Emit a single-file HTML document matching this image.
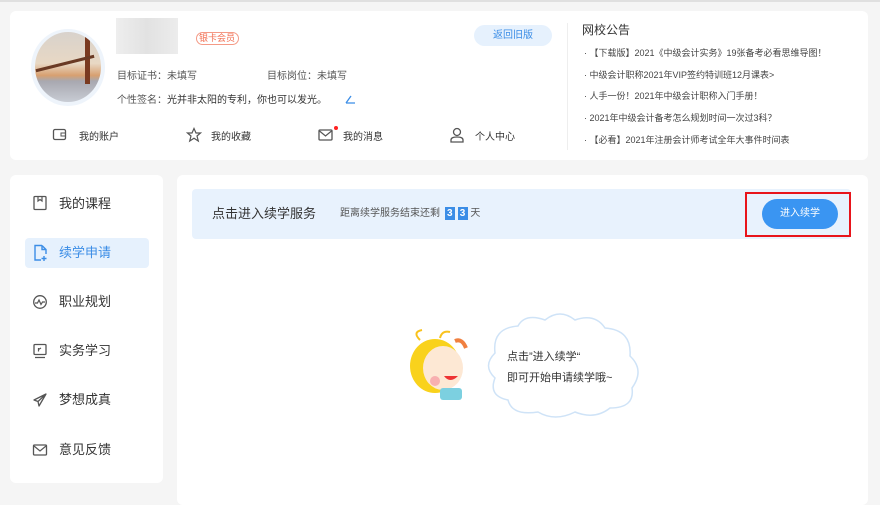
<!DOCTYPE html>
<html><head><meta charset="utf-8"><style>
*{margin:0;padding:0;box-sizing:border-box}
body{width:880px;height:499px;background:#f5f5f5;font-family:"Liberation Sans","Noto Sans CJK SC",sans-serif;position:relative;overflow:hidden;color:#333}
.abs{position:absolute}
.card{position:absolute;background:#fff;border-radius:6px}
.t{position:absolute;white-space:nowrap;line-height:1.2}
</style></head><body>
<div class="abs" style="left:0;top:0;width:880px;height:2px;background:#e0e0e0"></div>
<div class="card" style="left:10px;top:11px;width:858px;height:149px"></div>
<div class="abs" style="left:31px;top:29px;width:74px;height:77px;border-radius:50%;background:#eef4fb"></div>
<div class="abs" style="left:35px;top:32px;width:66px;height:70px;border-radius:50%;overflow:hidden;background:linear-gradient(#d8d2cc 0%,#e8d8c4 45%,#d8a070 62%,#a8a8b0 70%,#c8ccd4 100%)">
<div class="abs" style="left:50px;top:4px;width:5px;height:48px;background:#7a3a20"></div>
<div class="abs" style="left:0;top:30px;width:60px;height:3px;background:#6a3a24;transform:rotate(-14deg)"></div>
</div>
<div class="abs" style="left:116px;top:18px;width:62px;height:36px;background:linear-gradient(90deg,#eee,#e2e2e2,#ececec)"></div>
<div class="abs" style="left:196px;top:32px;width:43px;height:13px;border:1px solid #f49a86;border-radius:7px"></div>
<div class="t" style="left:199px;top:33px;font-size:9px;color:#f26d50">银卡会员</div>
<div class="abs" style="left:474px;top:25px;width:78px;height:21px;border-radius:11px;background:#e6f1fd"></div>
<div class="t" style="left:474px;top:30px;width:78px;text-align:center;font-size:10px;color:#3b8de6">返回旧版</div>
<div class="t" style="left:117px;top:71px;font-size:10px;color:#555">目标证书：未填写</div>
<div class="t" style="left:267px;top:71px;font-size:10px;color:#555">目标岗位：未填写</div>
<div class="t" style="left:117px;top:95px;font-size:10px;color:#555">个性签名：<span style="color:#333">光并非太阳的专利，你也可以发光。</span></div>
<svg class="abs" style="left:344px;top:94px" width="12" height="10"><path d="M2 9L7 2M2 9H11" stroke="#3b8de6" stroke-width="1.3" fill="none"/></svg>
<svg class="abs" style="left:52px;top:128px" width="16" height="14"><rect x="1.5" y="1.5" width="12" height="10" rx="1.5" stroke="#555" stroke-width="1.3" fill="none"/><path d="M9 5H13.5V8H9Z" stroke="#555" fill="none"/></svg>
<div class="t" style="left:79px;top:132px;font-size:10px;color:#333">我的账户</div>
<svg class="abs" style="left:186px;top:127px" width="16" height="16"><path d="M8 1.5L10 6H14.5L11 9L12.3 14L8 11.2L3.7 14L5 9L1.5 6H6Z" stroke="#555" stroke-width="1.2" fill="none"/></svg>
<div class="t" style="left:211px;top:132px;font-size:10px;color:#333">我的收藏</div>
<svg class="abs" style="left:318px;top:127px" width="16" height="16"><rect x="1" y="3" width="13" height="10" rx="1" stroke="#555" stroke-width="1.3" fill="none"/><path d="M1.5 4L7.5 9L13.5 4" stroke="#555" stroke-width="1.2" fill="none"/></svg>
<div class="abs" style="left:334px;top:126px;width:4px;height:4px;border-radius:50%;background:#f22"></div>
<div class="t" style="left:343px;top:132px;font-size:10px;color:#333">我的消息</div>
<svg class="abs" style="left:450px;top:127px" width="14" height="17"><circle cx="7" cy="5" r="3.5" stroke="#555" stroke-width="1.3" fill="none"/><path d="M1 15V13Q1 10 7 10Q13 10 13 13V15Z" stroke="#555" stroke-width="1.3" fill="none"/></svg>
<div class="t" style="left:475px;top:132px;font-size:10px;color:#333">个人中心</div>
<div class="abs" style="left:567px;top:23px;width:1px;height:127px;background:#eee"></div>
<div class="t" style="left:582px;top:23px;font-size:12px;color:#333">网校公告</div>
<div style="position:absolute;left:584px;top:43px;font-size:9px;color:#444;line-height:21.7px;white-space:nowrap">
<div>&middot; 【下载版】2021《中级会计实务》19张备考必看思维导图！</div>
<div>&middot; 中级会计职称2021年VIP签约特训班12月课表&gt;</div>
<div>&middot; 人手一份！2021年中级会计职称入门手册！</div>
<div>&middot; 2021年中级会计备考怎么规划时间一次过3科？</div>
<div>&middot; 【必看】2021年注册会计师考试全年大事件时间表</div>
</div>
<div class="card" style="left:10px;top:175px;width:153px;height:308px"></div>
<div class="abs" style="left:25px;top:238px;width:124px;height:30px;background:#e6f1fd;border-radius:4px"></div>
<svg class="abs" style="left:32px;top:195px" width="16" height="16"><rect x="2" y="1.5" width="12" height="13" rx="1" stroke="#555" stroke-width="1.3" fill="none"/><path d="M6 1.5V6L8 4.5L10 6V1.5" stroke="#555" stroke-width="1.2" fill="none"/></svg>
<div class="t" style="left:59px;top:196px;font-size:13px;color:#333">我的课程</div>
<svg class="abs" style="left:32px;top:244px" width="16" height="18"><path d="M10 1.5H3V16H9M10 1.5L14 5.5V10M10 1.5V5.5H14M12 12V17M9.5 14.5H14.5" stroke="#3b8de6" stroke-width="1.4" fill="none"/></svg>
<div class="t" style="left:59px;top:245px;font-size:13px;color:#3b8de6">续学申请</div>
<svg class="abs" style="left:32px;top:294px" width="16" height="16"><circle cx="8" cy="8" r="6.3" stroke="#555" stroke-width="1.3" fill="none"/><path d="M3 9H5.5L7 6L9 10.5L10.5 8H13" stroke="#555" stroke-width="1.2" fill="none"/></svg>
<div class="t" style="left:59px;top:294px;font-size:13px;color:#333">职业规划</div>
<svg class="abs" style="left:32px;top:343px" width="16" height="16"><rect x="2" y="1.5" width="12" height="10" rx="1" stroke="#555" stroke-width="1.3" fill="none"/><path d="M3 14.5H13M6.5 5V8.5M6.5 6.5L9 5" stroke="#555" stroke-width="1.2" fill="none"/></svg>
<div class="t" style="left:59px;top:343px;font-size:13px;color:#333">实务学习</div>
<svg class="abs" style="left:32px;top:392px" width="16" height="16"><path d="M14 2L2 8L6 9.5L7 14Z M6 9.5L14 2" stroke="#555" stroke-width="1.3" fill="none" stroke-linejoin="round"/></svg>
<div class="t" style="left:59px;top:392px;font-size:13px;color:#333">梦想成真</div>
<svg class="abs" style="left:32px;top:442px" width="16" height="16"><rect x="1.5" y="3" width="13" height="10" rx="1" stroke="#555" stroke-width="1.3" fill="none"/><path d="M2 4L8 9L14 4" stroke="#555" stroke-width="1.2" fill="none"/></svg>
<div class="t" style="left:59px;top:442px;font-size:13px;color:#333">意见反馈</div>
<div class="card" style="left:177px;top:175px;width:691px;height:330px"></div>
<div class="abs" style="left:192px;top:189px;width:659px;height:50px;background:#e8f2fd;border-radius:4px"></div>
<div class="t" style="left:212px;top:206px;font-size:13px;color:#333">点击进入续学服务</div>
<div class="t" style="left:340px;top:207px;font-size:10px;color:#555">距离续学服务结束还剩 <span style="display:inline-block;width:10px;height:13px;background:#3b8de6;color:#fff;text-align:center;font-weight:bold;line-height:13px;margin-left:2px;vertical-align:middle">3</span> <span style="display:inline-block;width:10px;height:13px;background:#3b8de6;color:#fff;text-align:center;font-weight:bold;line-height:13px;vertical-align:middle">3</span> 天</div>
<div class="abs" style="left:745px;top:192px;width:106px;height:45px;border:2px solid #e8141b"></div>
<div class="abs" style="left:762px;top:199px;width:76px;height:30px;border-radius:15px;background:#3a95f2"></div>
<div class="t" style="left:762px;top:208px;width:76px;text-align:center;font-size:10px;color:#fff">进入续学</div>
<svg class="abs" style="left:400px;top:308px" width="250" height="112">
<path d="M95 45Q92 20 118 18Q125 5 145 12Q160 0 175 12Q195 5 205 20Q232 22 230 48Q245 62 232 80Q235 100 210 100Q195 112 175 104Q155 114 138 104Q112 108 108 92Q88 88 95 70Q82 58 95 45Z" fill="#fff" stroke="#cfe3f7" stroke-width="1.5"/>
<ellipse cx="35" cy="58" rx="25" ry="27" fill="#f9d21c"/>
<ellipse cx="43" cy="60" rx="20" ry="22" fill="#fde8d4"/>
<path d="M55 33Q62 30 66 40" stroke="#f08040" stroke-width="4" fill="none"/>
<path d="M20 32Q12 24 22 22M40 30Q42 22 50 24" stroke="#f9c21c" stroke-width="2" fill="none"/>
<circle cx="35" cy="73" r="5" fill="#f8b0b0"/>
<path d="M44 68Q50 76 58 68" fill="#e33" />
<rect x="40" y="80" width="22" height="12" rx="3" fill="#7cd0e0"/>
<text x="107" y="52" font-size="11" fill="#333" font-family="Liberation Sans,Noto Sans CJK SC,sans-serif">点击”进入续学“</text>
<text x="107" y="73" font-size="11" fill="#333" font-family="Liberation Sans,Noto Sans CJK SC,sans-serif">即可开始申请续学哦~</text>
</svg>
</body></html>
